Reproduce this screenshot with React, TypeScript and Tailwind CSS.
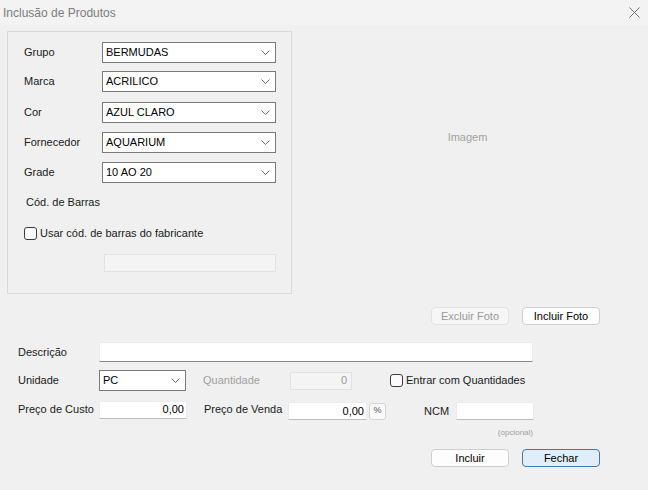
import React from "react";

const font = { fontFamily: '"Liberation Sans", Arial, sans-serif' };

function Chevron() {
  return (
    <svg width="9" height="5" viewBox="0 0 9 5" className="shrink-0">
      <path d="M0.5 0.5 L4.5 4.5 L8.5 0.5" fill="none" stroke="#6b6b6b" strokeWidth="1" />
    </svg>
  );
}

function Combo({ value, className }: { value: string; className: string }) {
  return (
    <div
      className={`flex items-center justify-between border border-[#7a7a7a] bg-white pl-[3px] pr-[5px] text-[11px] text-black ${className}`}
    >
      <span>{value}</span>
      <Chevron />
    </div>
  );
}

function TextBox({ value, className }: { value?: string; className: string }) {
  return (
    <div
      className={`flex items-center justify-end border border-[#ececec] border-b-[#bdbdbd] bg-white pr-[2px] text-[11px] text-black ${className}`}
    >
      {value}
    </div>
  );
}

function Check() {
  return <div className="h-[13px] w-[13px] shrink-0 rounded-[3px] border border-[#3c3c3c] bg-[#fbfbfb]" />;
}

function Btn({
  label,
  className,
}: {
  label: string;
  className: string;
}) {
  return (
    <div
      className={`flex h-[18px] w-[78px] items-center justify-center rounded-[4px] border text-[11px] ${className}`}
    >
      {label}
    </div>
  );
}

const comboRows = [
  { label: "Grupo", value: "BERMUDAS", mt: "mt-[10px]" },
  { label: "Marca", value: "ACRILICO", mt: "mt-[8px]" },
  { label: "Cor", value: "AZUL CLARO", mt: "mt-[10px]" },
  { label: "Fornecedor", value: "AQUARIUM", mt: "mt-[9px]" },
  { label: "Grade", value: "10 AO 20", mt: "mt-[9px]" },
];

export default function App() {
  return (
    <div className="flex h-[490px] w-[648px] flex-col bg-[#f0f0f0] text-[#1a1a1a]" style={font}>
      <div className="flex h-[25px] shrink-0 items-center justify-between bg-[#f3f3f3] pl-[3px] pr-[8px]">
        <span className="text-[12px] text-[#7d7d7d]">Inclusão de Produtos</span>
        <svg width="11" height="11" viewBox="0 0 11 11">
          <path d="M0.5 0.5 L10.5 10.5 M10.5 0.5 L0.5 10.5" stroke="#6f6f6f" strokeWidth="1" />
        </svg>
      </div>

      <div className="mt-[6px] flex">
        <div className="ml-[7px] flex h-[263px] w-[285px] flex-col border border-[#dadada] pl-[16px] text-[11px]">
          {comboRows.map((r) => (
            <div key={r.label} className={`flex h-[21px] items-center ${r.mt}`}>
              <span className="w-[78px]">{r.label}</span>
              <Combo value={r.value} className="h-[21px] w-[174px]" />
            </div>
          ))}
          <div className="mt-[12px] h-[14px] pl-[2px] leading-[14px]">Cód. de Barras</div>
          <div className="mt-[16px] flex items-center gap-[3px]">
            <Check />
            <span>Usar cód. de barras do fabricante</span>
          </div>
          <div className="ml-[80px] mt-[12px] h-[18px] w-[172px] border border-[#e2e2e2] bg-[#f4f4f4]" />
        </div>
        <div className="flex h-[212px] flex-1 items-center justify-center pl-[3px] pr-[8px] text-[11px] text-[#a3a3a3]">
          Imagem
        </div>
      </div>

      <div className="mt-[13px] flex justify-end gap-[13px] pr-[48px]">
        <Btn label="Excluir Foto" className="border-[#e3e3e3] bg-[#f6f6f6] text-[#9a9a9a]" />
        <Btn label="Incluir Foto" className="border-[#cfcfcf] bg-[#fdfdfd] text-black" />
      </div>

      <div className="flex flex-col pl-[18px] text-[11px]">
        <div className="mt-[17px] flex h-[20px] items-center">
          <span className="w-[81px]">Descrição</span>
          <div className="h-[20px] w-[434px] border border-[#ececec] border-b-[#8a8a8a] bg-white" />
        </div>

        <div className="mt-[8px] flex h-[21px] items-center">
          <span className="w-[81px]">Unidade</span>
          <Combo value="PC" className="h-[21px] w-[87px]" />
          <span className="ml-[17px] w-[87px] text-[#a0a0a0]">Quantidade</span>
          <div className="flex h-[18px] w-[62px] items-center justify-end border border-[#e2e2e2] bg-[#f4f4f4] pr-[4px] text-[#9a9a9a]">
            0
          </div>
          <div className="ml-[38px] flex items-center gap-[3px]">
            <Check />
            <span>Entrar com Quantidades</span>
          </div>
        </div>

        <div className="mt-[9px] flex h-[19px] items-center">
          <span className="w-[81px]">Preço de Custo</span>
          <TextBox value="0,00" className="h-[18px] w-[88px]" />
          <span className="ml-[17px] w-[84px]">Preço de Venda</span>
          <TextBox value="0,00" className="mt-[3px] h-[18px] w-[79px]" />
          <div className="ml-[2px] mt-[3px] flex h-[17px] w-[17px] items-center justify-center rounded-[3px] border border-[#d4d4d4] bg-[#fafafa] text-[9px] text-[#555]">
            %
          </div>
          <span className="ml-[38px] mt-[3px] w-[32px]">NCM</span>
          <TextBox className="mt-[3px] h-[18px] w-[78px]" />
        </div>

        <div className="mt-[8px] flex justify-end pr-[115px] text-[8px] text-[#a0a0a0]">(opcional)</div>

        <div className="mt-[10px] flex justify-end gap-[13px] pr-[48px]">
          <Btn label="Incluir" className="border-[#cfcfcf] bg-[#fdfdfd] text-black" />
          <Btn label="Fechar" className="border-[#4a76a0] bg-[#e1eef9] text-black" />
        </div>
      </div>
    </div>
  );
}
